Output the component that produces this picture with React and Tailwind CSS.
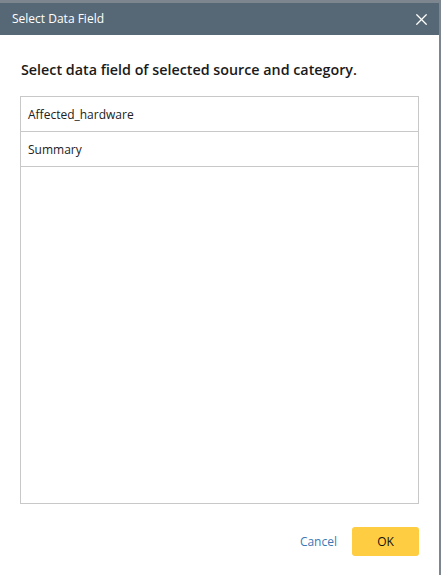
import { X } from 'lucide-react'

const fields = ['Affected_hardware', 'Summary']

export default function App() {
  return (
    <div className="w-[441px] h-[575px] bg-[#7d868e] flex flex-col pt-[3px]" style={{ fontFamily: '"Open Sans", sans-serif' }}>
      <div className="w-[439px] flex-1 bg-white flex flex-col">
        <div className="h-[32px] bg-[#566876] flex items-center justify-between pl-[12px] pr-[8px]">
          <span className="text-white text-[12px]">Select Data Field</span>
          <X size={19} strokeWidth={1.6} className="text-white" />
        </div>

        <div className="px-[20px] flex-1 flex flex-col">
          <h2 className="mt-[25px] pl-[1px] text-[14.3px] font-semibold text-[#1a1a1a] leading-[20px]">
            Select data field of selected source and category.
          </h2>

          <div className="mt-[16px] h-[408px] border border-[#c8c8c8]">
            {fields.map(f => (
              <div key={f} className="h-[35px] border-b border-[#c8c8c8] flex items-center pl-[7px] pt-[2px] text-[12px] text-[#222]">
                {f}
              </div>
            ))}
          </div>

          <div className="mt-[23px] flex items-center justify-end gap-[15px]">
            <button className="text-[12px] text-[#3c78b4] pt-[1px]">Cancel</button>
            <button className="w-[67px] h-[29px] rounded-[3px] bg-[#ffcd41] text-[12px] text-[#111]">OK</button>
          </div>
        </div>
      </div>
    </div>
  )
}
